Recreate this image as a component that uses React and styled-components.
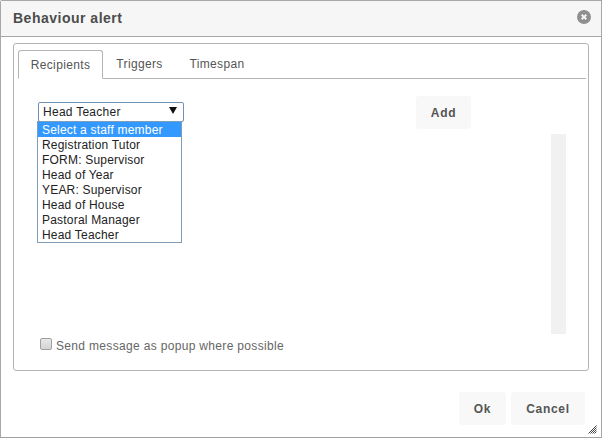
import React from "react";
import styled, { createGlobalStyle } from "styled-components";

const Global = createGlobalStyle`
  html, body { margin: 0; padding: 0; background: #fff; }
  body { font-family: "Liberation Sans", Arial, sans-serif; }
`;
const Dialog = styled.div`
  box-sizing: border-box; width: 602px; height: 438px; position: relative;
  border: 1px solid #a8a8a8; border-bottom-color: #a0a0a0; border-top-left-radius: 2px;
  display: flex; flex-direction: column; background: #fff; color: #555;
`;
const Header = styled.header`
  box-sizing: border-box; height: 36px; flex: none; background: #f6f6f6;
  border-bottom: 1px solid #a6a6a6; display: flex; align-items: center;
  justify-content: space-between; padding: 0 10px 0 12px;
`;
const Title = styled.h1`
  margin: -2px 0 0; font-size: 14px; font-weight: 700; color: #4c4c4c; letter-spacing: 0.5px;
`;
const Close = styled.svg` width: 14px; height: 14px; display: block; margin-top: -3px; `;
const Body = styled.div`
  flex: 1; display: flex; flex-direction: column; padding: 6px 12px 0 12px;
`;
const Panel = styled.section`
  box-sizing: border-box; height: 328px; border: 1px solid #b4b4b4; border-radius: 3px;
  padding: 6px 2px 0 4px; display: flex; flex-direction: column;
`;
const TabBar = styled.nav`
  display: flex; height: 29px; box-sizing: border-box; border-bottom: 1px solid #b4b4b4; flex: none;
`;
const Tab = styled.div`
  box-sizing: border-box; height: ${p => (p.$active ? "29px" : "28px")}; width: ${p => p.$w}px;
  font-size: 12px; letter-spacing: 0.35px; color: #555; text-align: center;
  line-height: 28px;
  ${p => p.$active && `
    border: 1px solid #b4b4b4; border-bottom: 1px solid #fff; border-radius: 3px 3px 0 0; background: #fff;
  `}
`;
const Content = styled.div`
  flex: 1; position: relative; display: flex; flex-direction: column;
  padding: 17px 19px 16px 20px;
`;
const TopRow = styled.div`
  display: flex; justify-content: space-between; align-items: flex-start; height: 38px; flex: none;
`;
const SelectBox = styled.div`
  box-sizing: border-box; width: 146px; height: 20px; margin-top: 6px; position: relative;
  border: 1px solid #6f93b8; border-radius: 2px; background: #fff;
  display: flex; align-items: center; justify-content: space-between; padding: 0 6px 0 4px;
  font-size: 12px; color: #222; letter-spacing: 0.27px;
`;
const Arrow = styled.svg` width: 8px; height: 7px; display: block; margin-top: -4px; `;
const Menu = styled.ul`
  position: absolute; left: -2px; top: 18px; width: 145px; box-sizing: border-box;
  margin: 0; padding: 0; list-style: none; background: #fff; border: 1px solid #7f9db9;
  z-index: 2;
`;
const Item = styled.li`
  height: 15px; line-height: 16px; padding-left: 4px; font-size: 12px; letter-spacing: 0.2px;
  white-space: nowrap; color: ${p => (p.$selected ? "#fff" : "#222")};
  background: ${p => (p.$selected ? "#3399ff" : "transparent")};
`;
const Button = styled.button`
  box-sizing: border-box; height: 33px; width: ${p => p.$w}px; border: none; border-radius: 3px;
  background: #f8f8f8; color: #555; font: 700 12px "Liberation Sans", Arial, sans-serif;
  letter-spacing: 0.7px; padding: 0;
  margin-right: ${p => p.$mr || 0}px;
`;
const ListArea = styled.div`
  flex: 1; display: flex; justify-content: flex-end; padding-right: 1px;
`;
const Scrollbar = styled.div`
  width: 15px; height: 200px; background: #f1f1f1;
`;
const CheckRow = styled.label`
  display: flex; align-items: center; gap: 4px; height: 16px; margin-left: 2px;
  font-size: 12px; color: #666; letter-spacing: 0.33px;
`;
const Check = styled.span`
  box-sizing: border-box; width: 12px; height: 12px; border: 1px solid #a0a0a0; border-radius: 2px;
  background: linear-gradient(#e8e8e8, #d4d4d4); margin-top: -4px; flex: none;
`;
const Footer = styled.footer`
  display: flex; justify-content: flex-end; gap: 5px; padding: 21px 4px 0 0;
`;
const Grip = styled.svg` position: absolute; right: 4px; bottom: 3px; width: 9px; height: 9px; `;

const options = ["Select a staff member","Registration Tutor","FORM: Supervisor","Head of Year","YEAR: Supervisor","Head of House","Pastoral Manager","Head Teacher"];

export default function App() {
  return (
    <>
      <Global />
      <Dialog>
        <Header>
          <Title>Behaviour alert</Title>
          <Close viewBox="0 0 14 14">
            <circle cx="7" cy="7" r="7" fill="#8f8f8f" />
            <path d="M4.7 4.7l4.6 4.6M9.3 4.7l-4.6 4.6" stroke="#f2f2f2" strokeWidth="2" />
          </Close>
        </Header>
        <Body>
          <Panel>
            <TabBar>
              <Tab $active $w={85}>Recipients</Tab>
              <Tab $w={73}>Triggers</Tab>
              <Tab $w={82}>Timespan</Tab>
            </TabBar>
            <Content>
              <TopRow>
                <SelectBox>
                  Head Teacher
                  <Arrow viewBox="0 0 8 7"><path d="M0 0h8L4 7z" fill="#111" /></Arrow>
                  <Menu>
                    {options.map((o, i) => <Item key={o} $selected={i === 0}>{o}</Item>)}
                  </Menu>
                </SelectBox>
                <Button $w={55} $mr={96}>Add</Button>
              </TopRow>
              <ListArea><Scrollbar /></ListArea>
              <CheckRow><Check />Send message as popup where possible</CheckRow>
            </Content>
          </Panel>
          <Footer>
            <Button $w={47}>Ok</Button>
            <Button $w={74}>Cancel</Button>
          </Footer>
        </Body>
        <Grip viewBox="0 0 9 9">
          <path d="M8.5 0.5L0.5 8.5M8.5 2.5L2.5 8.5M8.5 4.5L4.5 8.5M8.5 6.5L6.5 8.5" stroke="#444" strokeWidth="1" />
        </Grip>
      </Dialog>
    </>
  );
}
